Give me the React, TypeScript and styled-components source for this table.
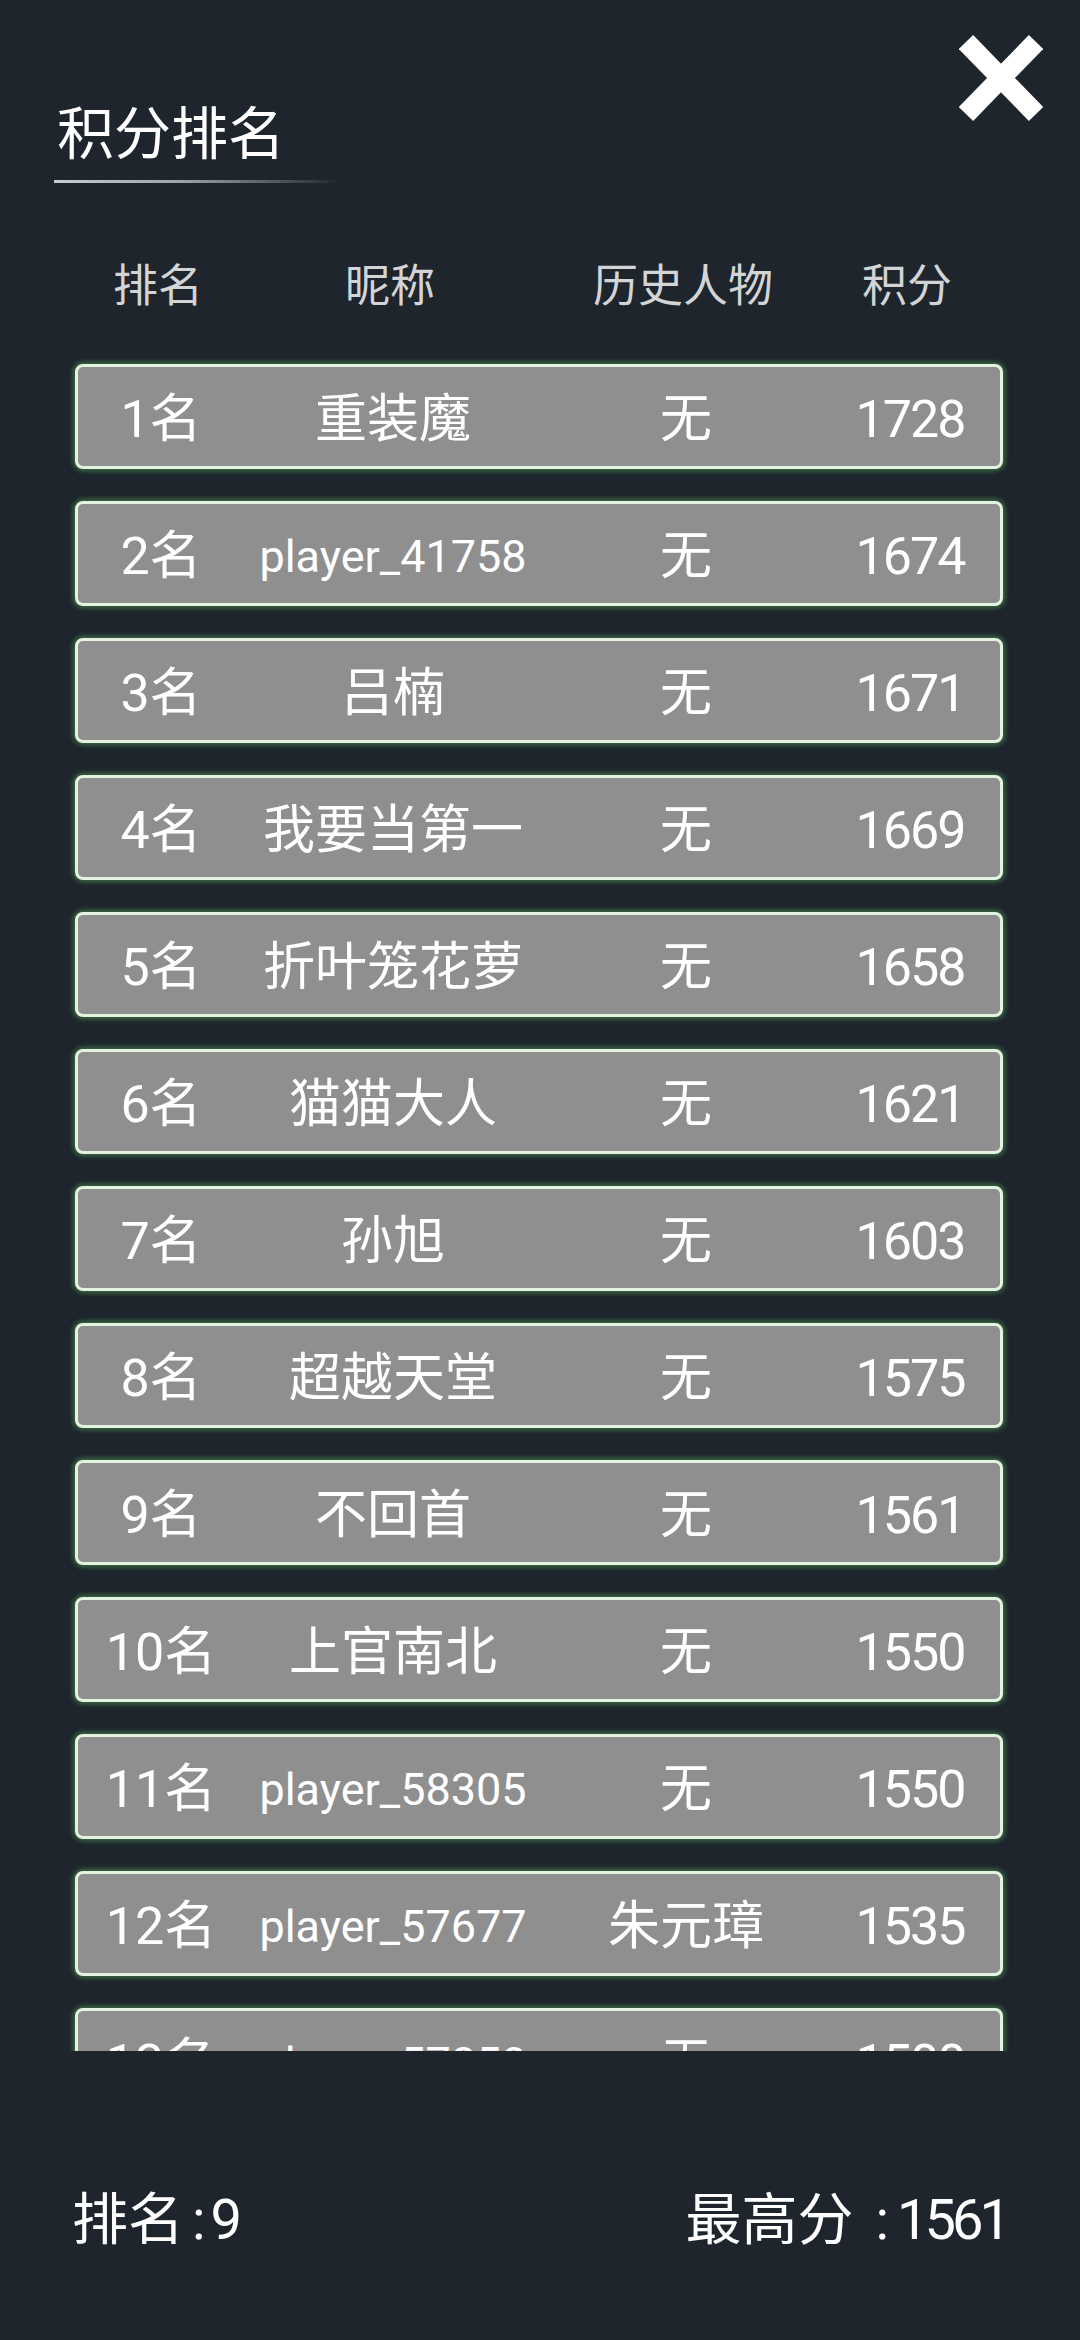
import React from "react";
import styled, { createGlobalStyle } from "styled-components";

const GlobalStyle = createGlobalStyle`
  html, body {
    margin: 0;
    padding: 0;
    background: #1e252d;
  }
  body {
    font-family: Roboto, "Noto Sans CJK SC", sans-serif;
  }
`;

const Page = styled.div`
  width: 1080px;
  height: 2340px;
  background: #1e252d;
  display: flex;
  flex-direction: column;
  overflow: hidden;
  color: #ffffff;
`;

const TopBar = styled.div`
  display: flex;
  justify-content: space-between;
  align-items: flex-start;
  padding: 35px 37px 0 54px;
`;

const TitleBlock = styled.div`
  display: flex;
  flex-direction: column;
  margin-top: 71px;
`;

const Title = styled.h1`
  margin: 0 0 0 3px;
  font-size: 57px;
  line-height: 57px;
  font-weight: 400;
  color: #ffffff;
`;

const TitleLine = styled.div`
  margin-top: 17px;
  width: 287px;
  height: 3px;
  background: linear-gradient(to right, #c9ccd0 0%, #9da2a8 45%, rgba(120, 126, 134, 0) 100%);
`;

const CloseButton = styled.button`
  width: 84px;
  height: 86px;
  padding: 0;
  border: none;
  background: transparent;
  display: flex;
  cursor: pointer;
`;

const COLS = "166px 298px 288px 160px";

const HeaderRow = styled.div`
  display: grid;
  grid-template-columns: ${COLS};
  align-items: center;
  height: 60px;
  margin: 74px 0 0 75px;
`;

const HeaderCell = styled.div`
  text-align: center;
  font-size: 45px;
  line-height: 60px;
  color: #d2d4d6;
  white-space: nowrap;
`;

const ListViewport = styled.div`
  height: 1734px;
  overflow: hidden;
  padding: 47px 0 0 75px;
  box-sizing: border-box;
  display: flex;
  flex-direction: column;
  gap: 32px;
`;

const RankRow = styled.div`
  flex: none;
  width: 928px;
  height: 105px;
  box-sizing: border-box;
  border: 3px solid #e4f3e0;
  border-radius: 8px;
  background: #8f8f8f;
  box-shadow: 0 0 5px 2px rgba(86, 170, 86, 0.55);
  display: grid;
  grid-template-columns: ${COLS};
  align-items: center;
`;

const Cell = styled.div<{ $small?: boolean; $num?: boolean }>`
  text-align: center;
  font-size: ${(p) => (p.$small ? "45px" : "52px")};
  letter-spacing: ${(p) => (p.$num ? "-2px" : "0")};
  line-height: 1;
  color: #ffffff;
  white-space: nowrap;
  margin-top: 6px;
`;

const Footer = styled.div`
  margin-top: 141px;
  display: flex;
  justify-content: space-between;
  align-items: center;
  padding: 0 73px 0 72px;
`;

const FooterText = styled.div`
  font-size: 56px;
  line-height: 56px;
  color: #ffffff;
  white-space: nowrap;
`;

const Colon = styled.span<{ $wide?: boolean }>`
  margin: ${(p) => (p.$wide ? "0 8px 0 22px" : "0 5px 0 8px")};
`;

const Digits = styled.span`
  letter-spacing: -4px;
`;

type Entry = { rank: number; name: string; hero: string; score: number };

const entries: Entry[] = [
  { rank: 1, name: "重装魔", hero: "无", score: 1728 },
  { rank: 2, name: "player_41758", hero: "无", score: 1674 },
  { rank: 3, name: "吕楠", hero: "无", score: 1671 },
  { rank: 4, name: "我要当第一", hero: "无", score: 1669 },
  { rank: 5, name: "折叶笼花萝", hero: "无", score: 1658 },
  { rank: 6, name: "猫猫大人", hero: "无", score: 1621 },
  { rank: 7, name: "孙旭", hero: "无", score: 1603 },
  { rank: 8, name: "超越天堂", hero: "无", score: 1575 },
  { rank: 9, name: "不回首", hero: "无", score: 1561 },
  { rank: 10, name: "上官南北", hero: "无", score: 1550 },
  { rank: 11, name: "player_58305", hero: "无", score: 1550 },
  { rank: 12, name: "player_57677", hero: "朱元璋", score: 1535 },
  { rank: 13, name: "player_57850", hero: "无", score: 1500 },
];

const CloseIcon = () => (
  <svg width="84" height="86" viewBox="0 0 84 86">
    <line x1="7" y1="7" x2="77" y2="79" stroke="#ffffff" strokeWidth="20" />
    <line x1="77" y1="7" x2="7" y2="79" stroke="#ffffff" strokeWidth="20" />
  </svg>
);

export default function App() {
  return (
    <>
      <GlobalStyle />
      <Page>
        <TopBar>
          <TitleBlock>
            <Title>积分排名</Title>
            <TitleLine />
          </TitleBlock>
          <CloseButton aria-label="关闭">
            <CloseIcon />
          </CloseButton>
        </TopBar>

        <HeaderRow>
          <HeaderCell>排名</HeaderCell>
          <HeaderCell>昵称</HeaderCell>
          <HeaderCell>历史人物</HeaderCell>
          <HeaderCell>积分</HeaderCell>
        </HeaderRow>

        <ListViewport>
          {entries.map((e) => (
            <RankRow key={e.rank}>
              <Cell>{e.rank}名</Cell>
              <Cell $small={/^[\x00-\x7f]+$/.test(e.name)}>{e.name}</Cell>
              <Cell>{e.hero}</Cell>
              <Cell $num>{e.score}</Cell>
            </RankRow>
          ))}
        </ListViewport>

        <Footer>
          <FooterText>
            排名<Colon>:</Colon>9
          </FooterText>
          <FooterText>
            最高分<Colon $wide>:</Colon>
            <Digits>1561</Digits>
          </FooterText>
        </Footer>
      </Page>
    </>
  );
}
